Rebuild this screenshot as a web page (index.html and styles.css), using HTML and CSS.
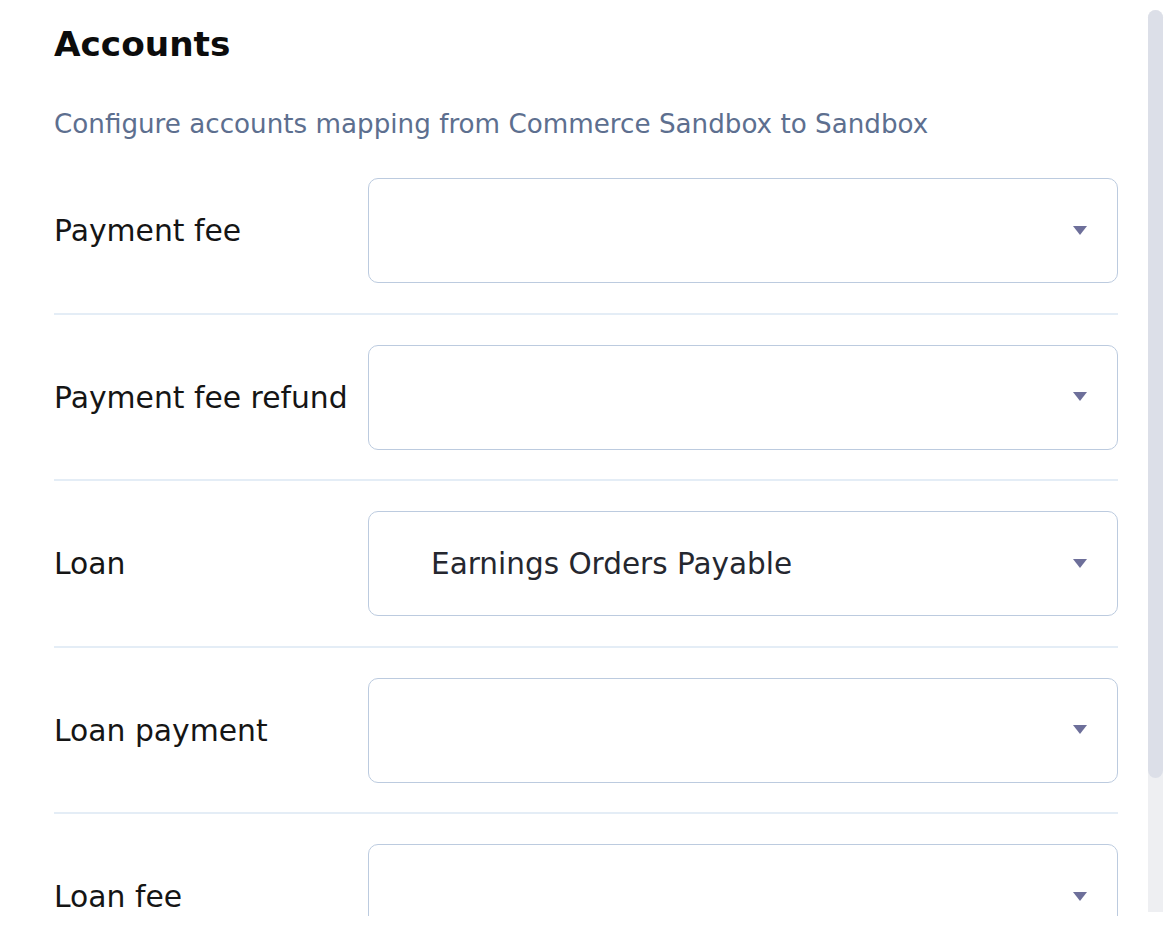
FILE: index.html
```html
<!DOCTYPE html>
<html>
<head>
<meta charset="utf-8">
<link rel="stylesheet" href="styles.css">
</head>
<body>
<div class="viewport">
  <div class="content">
    <h1 class="title">Accounts</h1>
    <p class="subtitle">Configure accounts mapping from Commerce Sandbox to Sandbox</p>
    <div class="rows">
      <div class="row">
        <div class="label">Payment fee</div>
        <div class="select"><span class="value"></span><span class="caret"></span></div>
      </div>
      <div class="row">
        <div class="label">Payment fee refund</div>
        <div class="select"><span class="value"></span><span class="caret"></span></div>
      </div>
      <div class="row">
        <div class="label">Loan</div>
        <div class="select"><span class="value">Earnings Orders Payable</span><span class="caret"></span></div>
      </div>
      <div class="row">
        <div class="label">Loan payment</div>
        <div class="select"><span class="value"></span><span class="caret"></span></div>
      </div>
      <div class="row">
        <div class="label">Loan fee</div>
        <div class="select"><span class="value"></span><span class="caret"></span></div>
      </div>
    </div>
  </div>
  <div class="scrollbar"><div class="thumb"></div></div>
</div>
</body>
</html>
```

FILE: styles.css
```css
html, body {
  margin: 0;
  padding: 0;
  background: #ffffff;
}
body {
  font-family: "DejaVu Sans", "Noto Sans", sans-serif;
  color: #111;
}
.viewport {
  display: flex;
  height: 916px;
}
.content {
  flex: 1;
  overflow: hidden;
  padding: 0 30px 0 54px;
}
.title {
  margin: 22px 0 0;
  font-size: 34.3px;
  font-weight: 700;
  line-height: 44px;
  color: #0c0c0c;
}
.subtitle {
  margin: 43px 0 0;
  font-size: 26.2px;
  line-height: 30px;
  color: #5d6f8f;
}
.rows {
  margin-top: 39px;
}
.row {
  display: flex;
  align-items: center;
  padding: 30px 0 29.5px;
  border-bottom: 2px solid #e4edf6;
}
.row:first-child {
  padding-top: 0;
}
.label {
  width: 314px;
  font-size: 29.8px;
  color: #151515;
}
.select {
  flex: 1;
  height: 103px;
  border: 1px solid #bccbdf;
  border-radius: 10px;
  display: flex;
  align-items: center;
  padding: 0 30px 0 62px;
}
.value {
  flex: 1;
  font-size: 29.5px;
  color: #25272f;
}
.caret {
  width: 0;
  height: 0;
  border-left: 7.5px solid transparent;
  border-right: 7.5px solid transparent;
  border-top: 9px solid #6d6f9a;
  margin-top: -1px;
}
.scrollbar {
  width: 15px;
  margin: 10px 6px 4px 0;
  background: #eeeff2;
  border-radius: 8px 8px 0 0;
}
.thumb {
  height: 768px;
  background: #dcdfe8;
  border-radius: 8px;
}
```
